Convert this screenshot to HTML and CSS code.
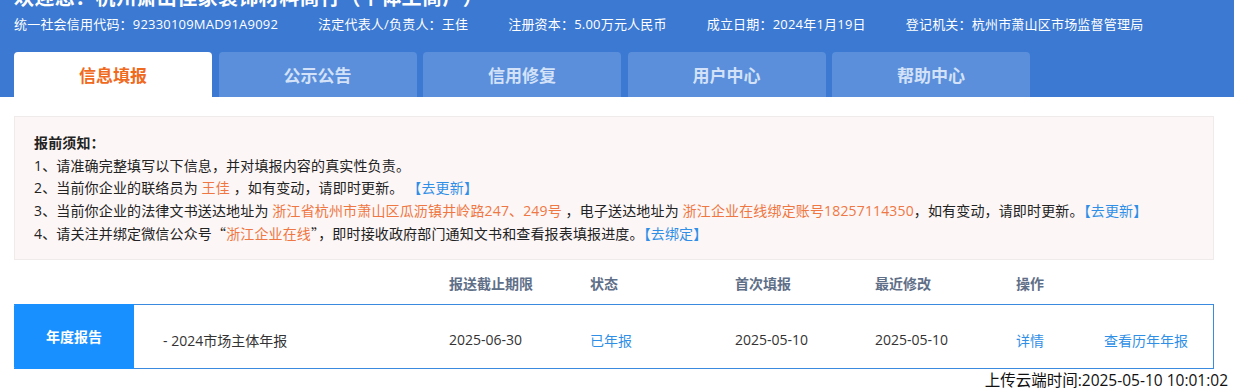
FILE: index.html
```html
<!DOCTYPE html>
<html lang="zh-CN">
<head>
<meta charset="utf-8">
<title>信息填报</title>
<link rel="stylesheet" href="styles.css">
</head>
<body>
<header class="top">
  <h1 class="title">欢迎您：杭州萧山佳家装饰材料商行（个体工商户）</h1>
  <div class="info">
    <span>统一社会信用代码：92330109MAD91A9092</span>
    <span>法定代表人/负责人：王佳</span>
    <span>注册资本：5.00万元人民币</span>
    <span>成立日期：2024年1月19日</span>
    <span>登记机关：杭州市萧山区市场监督管理局</span>
  </div>
  <nav class="tabs">
    <a class="tab active">信息填报</a>
    <a class="tab">公示公告</a>
    <a class="tab">信用修复</a>
    <a class="tab">用户中心</a>
    <a class="tab">帮助中心</a>
  </nav>
</header>
<main class="main">
  <section class="notice">
    <p class="notice-title">报前须知：</p>
    <p>1、请准确完整填写以下信息，并对填报内容的真实性负责。</p>
    <p>2、当前你企业的联络员为 <span class="hl">王佳</span> ，如有变动，请即时更新。 <a class="link">【去更新】</a></p>
    <p>3、当前你企业的法律文书送达地址为 <span class="hl">浙江省杭州市萧山区瓜沥镇井岭路247、249号</span> ，电子送达地址为 <span class="hl">浙江企业在线绑定账号18257114350</span>，如有变动，请即时更新。<a class="link">【去更新】</a></p>
    <p>4、请关注并绑定微信公众号<span class="q">“</span><span class="hl">浙江企业在线</span><span class="q">”</span>，即时接收政府部门通知文书和查看报表填报进度。<a class="link">【去绑定】</a></p>
  </section>
  <div class="thead grid">
    <span></span><span></span>
    <span>报送截止期限</span>
    <span>状态</span>
    <span>首次填报</span>
    <span>最近修改</span>
    <span>操作</span>
    <span></span>
  </div>
  <div class="row grid">
    <div class="kind">年度报告</div>
    <span class="cell name">- 2024市场主体年报</span>
    <span class="cell">2025-06-30</span>
    <span class="cell link">已年报</span>
    <span class="cell">2025-05-10</span>
    <span class="cell">2025-05-10</span>
    <span class="cell link">详情</span>
    <span class="cell link">查看历年年报</span>
  </div>
</main>
<footer class="foot">上传云端时间:2025-05-10 10:01:02</footer>
</body>
</html>
```

FILE: styles.css
```css
* { box-sizing: border-box; }
html, body { margin: 0; padding: 0; }
body {
  width: 1234px;
  height: 392px;
  overflow: hidden;
  background: #ffffff;
  font-family: "Open Sans", "Noto Sans CJK SC", sans-serif;
  color: #333333;
}
.top {
  background: #3b79d2;
  padding: 0 20px 0 14px;
  color: #ffffff;
}
.title {
  margin: -16px 0 0;
  font-size: 20px;
  line-height: 28px;
  font-weight: 700;
  letter-spacing: 0.4px;
}
.info {
  display: flex;
  gap: 40px;
  font-size: 13px;
  line-height: 22px;
  margin-top: 1px;
  letter-spacing: 0.2px;
}
.tabs {
  display: flex;
  gap: 6.5px;
  margin-top: 17px;
}
.tab {
  width: 198px;
  height: 45px;
  display: flex;
  align-items: center;
  justify-content: center;
  background: #5b8fdb;
  color: #d3e2f8;
  font-size: 17px;
  font-weight: 700;
  border-radius: 4px 4px 0 0;
}
.tab.active {
  background: #ffffff;
  color: #f06a1e;
}
.main {
  padding: 19px 20px 0 14px;
}
.notice {
  background: #fcf6f6;
  border: 1px solid #f0ebeb;
  padding: 15px 16px 13px 19px;
  font-size: 14px;
  line-height: 22.5px;
  letter-spacing: 0.15px;
  color: #222222;
}
.notice p { margin: 0; white-space: nowrap; }
.notice-title { font-weight: 700; }
.q { font-family: "Noto Sans CJK SC", sans-serif; }
.hl { color: #ef7743; }
.link { color: #2f8fe6; }
.grid {
  display: grid;
  grid-template-columns: 120px 315px 141px 145px 140px 141px 88px 1fr;
}
.thead {
  padding: 13px 0 9px;
  font-size: 14px;
  line-height: 22px;
  font-weight: 700;
  color: #5f6f88;
}
.row {
  height: 65px;
  border: 1px solid #3a8be0;
  border-left: none;
  align-items: center;
  font-size: 14px;
  color: #333333;
}
.kind {
  align-self: stretch;
  margin: -1px 0;
  background: #1890ff;
  color: #ffffff;
  font-weight: 700;
  font-size: 14px;
  display: flex;
  align-items: center;
  justify-content: center;
  border-radius: 2px 0 0 2px;
}
.cell { padding-top: 7px; }
.cell.name { padding-left: 29px; }
.foot {
  text-align: right;
  padding: 0 6px 0 0;
  font-size: 15.5px;
  line-height: 22px;
  color: #111111;
}
```
